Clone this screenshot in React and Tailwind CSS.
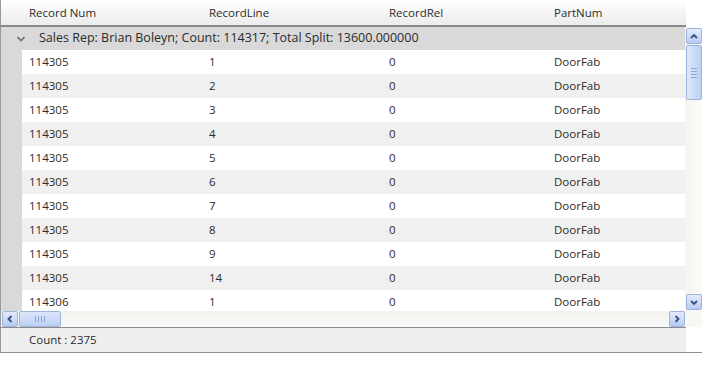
import React from 'react'

const columns = [
  { label: 'Record Num', w: 'w-[180px]' },
  { label: 'RecordLine', w: 'w-[180px]' },
  { label: 'RecordRel', w: 'w-[165px]' },
  { label: 'PartNum', w: 'flex-1' },
]

const rows = [
  ['114305', '1'], ['114305', '2'], ['114305', '3'], ['114305', '4'],
  ['114305', '5'], ['114305', '6'], ['114305', '7'], ['114305', '8'],
  ['114305', '9'], ['114305', '14'], ['114306', '1'],
]

const ArrowBtn = ({ dir, className = '' }) => {
  const paths = {
    up: 'M3 8 L6 5 L9 8',
    down: 'M3 5 L6 8 L9 5',
    left: 'M7.5 3 L4.5 6 L7.5 9',
    right: 'M4.5 3 L7.5 6 L4.5 9',
  }
  return (
    <div className={`w-[16px] h-[16px] rounded-[2px] border border-[#9fb4dc] bg-gradient-to-b from-[#e3ecfb] to-[#b7cbf2] flex items-center justify-center ${className}`}>
      <svg width="12" height="12" viewBox="0 0 12 12">
        <path d={paths[dir]} fill="none" stroke="#3a4f86" strokeWidth="1.8" />
      </svg>
    </div>
  )
}

export default function App() {
  return (
    <div className="w-[702px] h-[389px] bg-white text-[#2b2b2b] text-[11.5px] overflow-hidden" style={{ fontFamily: '"Open Sans", "Noto Sans", sans-serif' }}>
      <div className="h-[353px] flex flex-col border-b border-[#8c8c8c]">
        {/* header */}
        <div className="flex h-[27px] shrink-0">
          <div className="w-[686px] flex border-l border-[#9a9a9a] border-b-2 border-b-[#8a8a8a] bg-gradient-to-b from-white to-[#ececec]">
            <div className="w-[21px]" />
            {columns.map(c => (
              <div key={c.label} className={`${c.w} pl-[7px] flex items-center`}>{c.label}</div>
            ))}
          </div>
          <div className="flex-1" />
        </div>

        {/* body */}
        <div className="flex h-[284px] shrink-0">
          <div className="w-[686px] border-l border-[#9a9a9a] overflow-hidden">
            <div className="h-[23px] bg-[#d9d9d9] flex items-center">
              <div className="w-[38px] flex justify-center pl-[1px]">
                <svg width="10" height="8" viewBox="0 0 10 8">
                  <path d="M1.5 2 L5 5.5 L8.5 2" fill="none" stroke="#6b6b6b" strokeWidth="1.6" />
                </svg>
              </div>
              <span className="text-[12.5px]">Sales Rep: Brian Boleyn; Count: 114317; Total Split: 13600.000000</span>
            </div>
            <div className="flex">
              <div className="w-[21px] bg-[#d9d9d9] shrink-0" />
              <div className="flex-1">
                {rows.map((r, i) => (
                  <div key={i} className={`flex h-[24px] items-center ${i % 2 ? 'bg-[#f0f0f0]' : 'bg-white'}`}>
                    <div className="w-[180px] pl-[7px]">{r[0]}</div>
                    <div className="w-[180px] pl-[7px]">{r[1]}</div>
                    <div className="w-[165px] pl-[7px]">0</div>
                    <div className="flex-1 pl-[7px]">DoorFab</div>
                  </div>
                ))}
              </div>
            </div>
          </div>
          {/* vertical scrollbar */}
          <div className="flex-1 bg-gradient-to-r from-[#f3f3ef] to-[#fbfbf9] flex flex-col justify-between pl-[1px]">
            <ArrowBtn dir="up" className="mt-[1px]" />
            <div className="flex-1 flex flex-col">
              <div className="w-[16px] h-[55px] mt-[1px] rounded-[2px] border border-[#9fb4dc] bg-gradient-to-r from-[#dde7fb] to-[#bccff4] flex flex-col items-center justify-center gap-[2px]">
                <div className="w-[6px] h-px bg-[#8ea4d6]" />
                <div className="w-[6px] h-px bg-[#8ea4d6]" />
                <div className="w-[6px] h-px bg-[#8ea4d6]" />
                <div className="w-[6px] h-px bg-[#8ea4d6]" />
              </div>
            </div>
            <ArrowBtn dir="down" className="mb-[1px]" />
          </div>
        </div>

        {/* horizontal scrollbar */}
        <div className="flex h-[16px] shrink-0">
          <div className="w-[686px] border-l border-[#9a9a9a] flex items-center bg-gradient-to-b from-[#f2f2ee] to-[#fafaf8] pl-[1px] pr-[1px]">
            <ArrowBtn dir="left" />
            <div className="flex-1 flex">
              <div className="w-[42px] h-[16px] ml-[1px] rounded-[2px] border border-[#9fb4dc] bg-gradient-to-b from-[#dde7fb] to-[#bccff4] flex items-center justify-center gap-[2px]">
                <div className="w-px h-[6px] bg-[#8ea4d6]" />
                <div className="w-px h-[6px] bg-[#8ea4d6]" />
                <div className="w-px h-[6px] bg-[#8ea4d6]" />
                <div className="w-px h-[6px] bg-[#8ea4d6]" />
              </div>
            </div>
            <ArrowBtn dir="right" />
          </div>
          <div className="flex-1 bg-[#f7f7f4]" />
        </div>

        {/* footer */}
        <div className="flex flex-1">
          <div className="w-[686px] border-l border-[#9a9a9a] border-t border-t-[#8c8c8c] bg-[#efefef] flex items-center pl-[28px]">
            Count : 2375
          </div>
          <div className="flex-1" />
        </div>
      </div>
    </div>
  )
}
